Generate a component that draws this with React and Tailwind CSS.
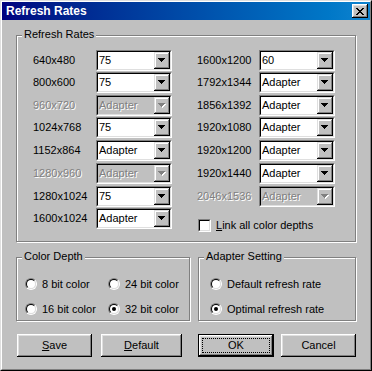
import React from 'react';

const raised =
  'shadow-[inset_-1px_-1px_0_#000,inset_1px_1px_0_#fff,inset_-2px_-2px_0_#808080,inset_2px_2px_0_#dfdfdf]';
const comboBtn =
  'shadow-[inset_-1px_-1px_0_#000,inset_1px_1px_0_#dfdfdf,inset_-2px_-2px_0_#808080,inset_2px_2px_0_#fff]';
const etched = 'border border-[#808080] shadow-[inset_1px_1px_0_#fff,1px_1px_0_#fff]';
const dim = 'text-[#808080] [text-shadow:1px_1px_0_#fff]';

const Arrow = ({ disabled }) => (
  <svg width="8" height="5" viewBox="0 0 8 5" shapeRendering="crispEdges">
    {disabled && (
      <g fill="#fff">
        <rect x="1" y="1" width="7" height="1" />
        <rect x="2" y="2" width="5" height="1" />
        <rect x="3" y="3" width="3" height="1" />
        <rect x="4" y="4" width="1" height="1" />
      </g>
    )}
    <g fill={disabled ? '#808080' : '#000'}>
      <rect x="0" y="0" width="7" height="1" />
      <rect x="1" y="1" width="5" height="1" />
      <rect x="2" y="2" width="3" height="1" />
      <rect x="3" y="3" width="1" height="1" />
    </g>
  </svg>
);

const Combo = ({ value, disabled }) => (
  <div className="w-[76px] h-[21px] border border-[#808080] border-r-white border-b-white">
    <div
      className={`h-full flex border border-black border-r-[#dfdfdf] border-b-[#dfdfdf] ${
        disabled ? 'bg-[#c0c0c0]' : 'bg-white'
      }`}
    >
      <span className={`flex-1 pl-[1px] leading-[17px] ${disabled ? dim : 'text-black'}`}>{value}</span>
      <span className={`w-[16px] h-full flex items-center justify-center bg-[#c0c0c0] ${comboBtn}`}>
        <Arrow disabled={disabled} />
      </span>
    </div>
  </div>
);

const Row = ({ res, value, disabled, mt, labelW }) => (
  <div className={`flex items-center ${mt}`}>
    <span className={`${labelW} ${disabled ? dim : ''}`}>{res}</span>
    <Combo value={value} disabled={disabled} />
  </div>
);

const Radio = ({ checked }) => (
  <span className="w-[12px] h-[12px] shrink-0 rounded-full border border-[#808080] border-r-white border-b-white">
    <span className="w-full h-full rounded-full border border-black border-r-[#dfdfdf] border-b-[#dfdfdf] bg-white flex items-center justify-center">
      {checked && <span className="w-[4px] h-[4px] rounded-full bg-black" />}
    </span>
  </span>
);

const Option = ({ label, checked, w }) => (
  <div className={`flex items-center gap-[5px] ${w}`}>
    <Radio checked={checked} />
    <span>{label}</span>
  </div>
);

const Group = ({ title, className, children }) => (
  <div className={`relative ${etched} ${className}`}>
    <span className="absolute left-[5px] -top-[8px] px-[2px] bg-[#c0c0c0] leading-[13px]">{title}</span>
    {children}
  </div>
);

const left = [
  ['640x480', '75', false, 'mt-0'],
  ['800x600', '75', false, 'mt-[1px]'],
  ['960x720', 'Adapter', true, 'mt-[2px]'],
  ['1024x768', '75', false, 'mt-[1px]'],
  ['1152x864', 'Adapter', false, 'mt-[2px]'],
  ['1280x960', 'Adapter', true, 'mt-[2px]'],
  ['1280x1024', '75', false, 'mt-[2px]'],
  ['1600x1024', 'Adapter', false, 'mt-[1px]'],
];

const right = [
  ['1600x1200', '60', false, 'mt-0'],
  ['1792x1344', 'Adapter', false, 'mt-[1px]'],
  ['1856x1392', 'Adapter', false, 'mt-[2px]'],
  ['1920x1080', 'Adapter', false, 'mt-[1px]'],
  ['1920x1200', 'Adapter', false, 'mt-[2px]'],
  ['1920x1440', 'Adapter', false, 'mt-[2px]'],
  ['2046x1536', 'Adapter', true, 'mt-[2px]'],
];

export default function App() {
  return (
    <div
      className="w-[372px] h-[371px] bg-[#c0c0c0] text-black text-[11px] border border-[#dfdfdf] border-r-black border-b-black"
      style={{ fontFamily: '"Liberation Sans", Arial, sans-serif' }}
    >
      <div className="h-full flex flex-col border border-white border-r-[#808080] border-b-[#808080]">
        <div className="h-[18px] flex items-center justify-between pl-[4px] pr-[2px] bg-gradient-to-r from-[#000080] to-[#1084d0]">
          <span className="text-white font-bold text-[12px] leading-[18px]">Refresh Rates</span>
          <span className={`w-[16px] h-[14px] flex items-center justify-center bg-[#c0c0c0] ${raised}`}>
            <svg width="8" height="7" viewBox="0 0 8 7" shapeRendering="crispEdges" fill="#000">
              <rect x="0" y="0" width="2" height="1" />
              <rect x="6" y="0" width="2" height="1" />
              <rect x="1" y="1" width="2" height="1" />
              <rect x="5" y="1" width="2" height="1" />
              <rect x="2" y="2" width="4" height="1" />
              <rect x="3" y="3" width="2" height="1" />
              <rect x="2" y="4" width="4" height="1" />
              <rect x="1" y="5" width="2" height="1" />
              <rect x="5" y="5" width="2" height="1" />
              <rect x="0" y="6" width="2" height="1" />
              <rect x="6" y="6" width="2" height="1" />
            </svg>
          </span>
        </div>

        <div className="flex flex-col pl-[14px]">
          <Group title="Refresh Rates" className="mt-[15px] w-[340px] h-[207px] pl-[16px] pt-[14px] flex gap-[25px]">
            <div className="flex flex-col">
              {left.map(([r, v, d, mt]) => (
                <Row key={r} res={r} value={v} disabled={d} mt={mt} labelW="w-[63px]" />
              ))}
            </div>
            <div className="flex flex-col">
              {right.map(([r, v, d, mt]) => (
                <Row key={r} res={r} value={v} disabled={d} mt={mt} labelW="w-[62px]" />
              ))}
              <div className="flex items-center gap-[5px] mt-[10px] ml-[1px]">
                <span className="w-[13px] h-[13px] border border-[#808080] border-r-white border-b-white">
                  <span className="block w-full h-full border border-black border-r-[#dfdfdf] border-b-[#dfdfdf] bg-white" />
                </span>
                <span>
                  <span className="underline">L</span>ink all color depths
                </span>
              </div>
            </div>
          </Group>

          <div className="flex gap-[8px] mt-[15px]">
            <Group title="Color Depth" className="w-[174px] h-[64px] pl-[8px] pt-[18px] flex flex-col gap-[8px]">
              <div className="flex">
                <Option label="8 bit color" w="w-[83px]" />
                <Option label="24 bit color" />
              </div>
              <div className="flex">
                <Option label="16 bit color" w="w-[83px]" />
                <Option label="32 bit color" checked />
              </div>
            </Group>
            <Group title="Adapter Setting" className="w-[158px] h-[64px] pl-[11px] pt-[18px] flex flex-col gap-[8px]">
              <Option label="Default refresh rate" />
              <Option label="Optimal refresh rate" checked />
            </Group>
          </div>

          <div className="flex mt-[13px] h-[23px]">
            <button className={`ml-[1px] w-[75px] h-full bg-[#c0c0c0] ${raised}`}>
              <span className="underline">S</span>ave
            </button>
            <button className={`ml-[9px] w-[81px] h-full bg-[#c0c0c0] ${raised}`}>
              <span className="underline">D</span>efault
            </button>
            <button className="ml-[16px] w-[76px] h-full border border-black">
              <span className={`w-full h-full flex items-center justify-center bg-[#c0c0c0] p-[3px] ${raised}`}>
                <span className="w-full h-full flex items-center justify-center border border-dotted border-black">
                  OK
                </span>
              </span>
            </button>
            <button className={`ml-[7px] w-[75px] h-full bg-[#c0c0c0] ${raised}`}>Cancel</button>
          </div>
        </div>
      </div>
    </div>
  );
}
